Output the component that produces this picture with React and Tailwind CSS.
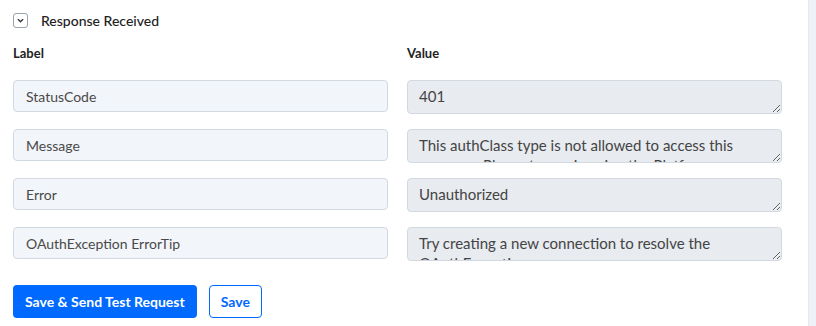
import React from "react";

const rows = [
  { label: "StatusCode", value: "401" },
  {
    label: "Message",
    value:
      "This authClass type is not allowed to access this resource. Please try again using the Platform user account.",
  },
  { label: "Error", value: "Unauthorized" },
  {
    label: "OAuthException ErrorTip",
    value: "Try creating a new connection to resolve the OAuthException error.",
  },
];

export default function App() {
  return (
    <div
      className="flex w-[816px] h-[326px] bg-white overflow-hidden text-[#333]"
      style={{ fontFamily: "Lato, 'Open Sans', sans-serif" }}
    >
      <div className="flex-1 pl-[13px] pr-[26px]">
        <div className="flex items-center mt-[13px] h-[15px]">
          <div className="w-[15px] h-[15px] rounded-[3px] border border-[#9aa3ad] flex items-center justify-center bg-white">
            <svg width="9" height="9" viewBox="0 0 10 10" fill="none">
              <path d="M2.5 4l2.5 2.5L7.5 4" stroke="#333" strokeWidth="1.5" strokeLinecap="round" strokeLinejoin="round" />
            </svg>
          </div>
          <span className="ml-[13px] text-[14px] text-[#222] font-medium">Response Received</span>
        </div>
        <div className="grid grid-cols-2 gap-x-[19px] mt-[17px]">
          <div className="text-[13px] font-bold text-[#222] h-[16px] leading-[16px]">Label</div>
          <div className="text-[13px] font-bold text-[#222] h-[16px] leading-[16px]">Value</div>
        </div>
        <div className="grid grid-cols-2 gap-x-[19px] gap-y-[15px] mt-[19px]">
          {rows.map((r) => (
            <React.Fragment key={r.label}>
              <div className="h-[32px] rounded-[4px] border border-[#d3d9e1] bg-[#f2f5f9] px-[12px] flex items-center text-[14px] text-[#4a4a4a]">
                {r.label}
              </div>
              <textarea
                readOnly
                value={r.value}
                rows={1}
                className="block h-[34px] w-full rounded-[4px] border border-[#d3d9e1] bg-[#e8ebf0] px-[11px] pt-[5px] text-[15px] leading-[20px] text-[#444] overflow-hidden outline-none"
              />
            </React.Fragment>
          ))}
        </div>
        <div className="flex gap-[12px] mt-[24px]">
          <button className="h-[33px] px-[12px] rounded-[4px] bg-[#0069ff] text-white text-[14px] font-bold">
            Save &amp; Send Test Request
          </button>
          <button className="h-[33px] px-[11px] rounded-[4px] border border-[#0069ff] bg-white text-[#0069ff] text-[14px] font-bold">
            Save
          </button>
        </div>
      </div>
      <div className="w-[8px] bg-[#eef1f5] border-l border-[#e6e9ee]" />
    </div>
  );
}
